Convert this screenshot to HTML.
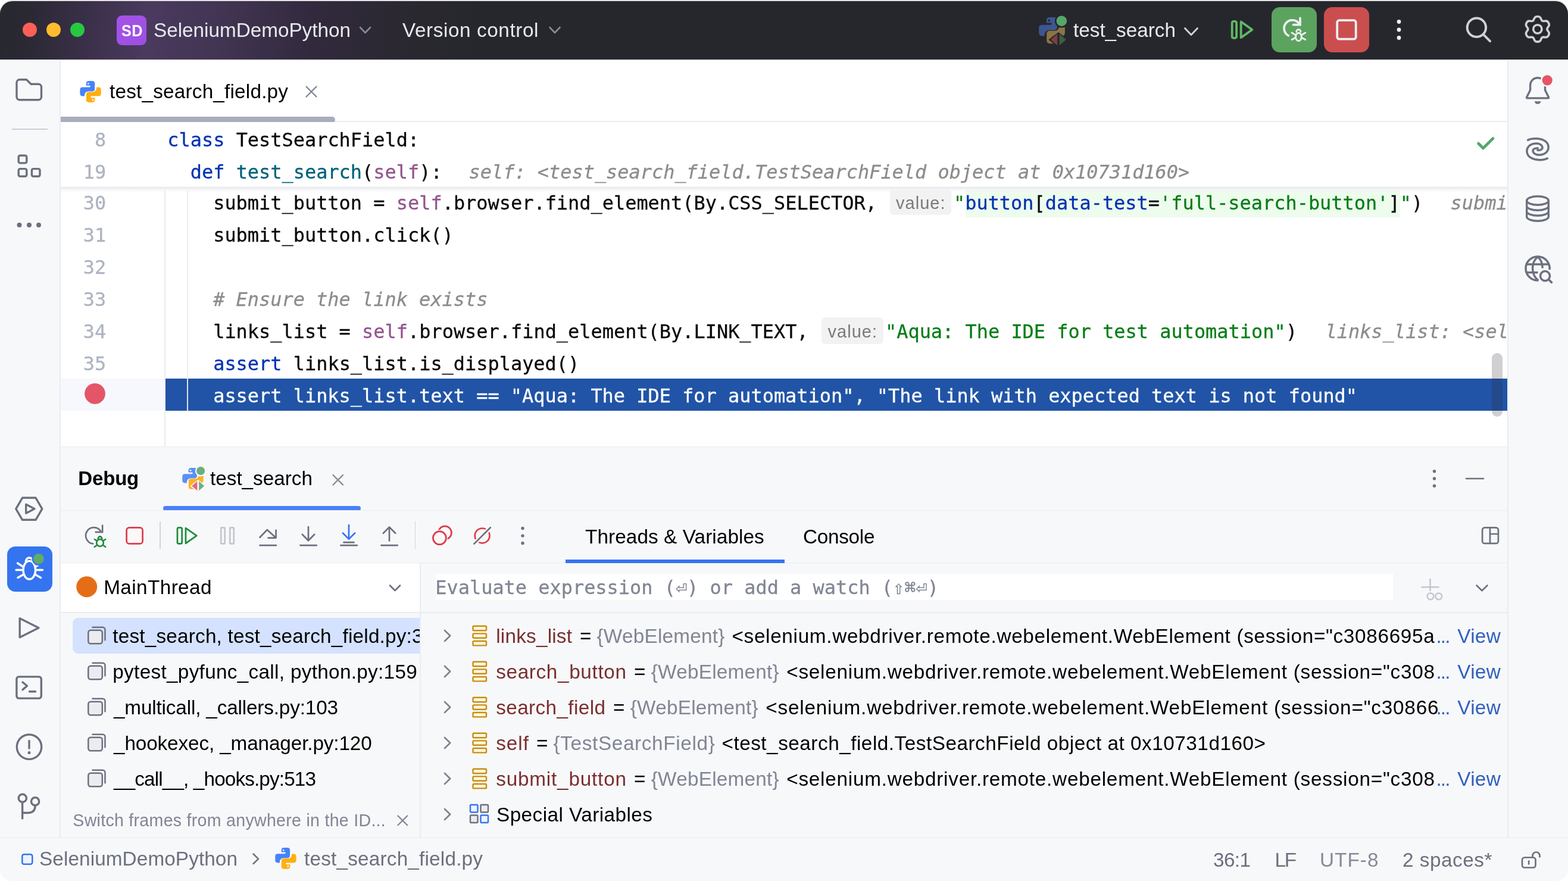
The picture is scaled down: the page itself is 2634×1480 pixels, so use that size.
<!DOCTYPE html>
<html lang="en"><head><meta charset="utf-8"><title>SeleniumDemoPython – test_search_field.py</title>
<style>
html,body{margin:0;padding:0;background:#fff;}
body{width:2634px;height:1480px;overflow:hidden;position:relative;font-family:"Liberation Sans", sans-serif;}
#win{position:absolute;left:0;top:2px;width:2634px;height:1478px;border-radius:21px;overflow:hidden;background:#F7F8FA;box-shadow:0 -1px 1px 0 rgba(120,120,130,.5);}
#page{position:absolute;left:0;top:-2px;width:2634px;height:1480px;will-change:transform;}
#page>div{position:absolute;}
.t{position:absolute;white-space:pre;}
.m{font-family:"DejaVu Sans Mono", "Liberation Mono", monospace;-webkit-text-stroke:.3px;}
#page>div.clip{overflow:hidden;}
.sd{transform:scaleX(.9);transform-origin:0 50%;letter-spacing:.5px;}
svg#ico{position:absolute;left:0;top:0;}
</style></head>
<body>
<div id="win"><div id="page">
<div style="left:0px;top:0px;width:2634px;height:100px;background:linear-gradient(96deg,#27282E 0px,#2B2934 55px,#3A2F48 145px,#4A3A5F 250px,#423553 370px,#32293D 530px,#29282F 700px,#26272D 800px,#26272D 100%);"></div>
<div style="left:196px;top:26px;width:50px;height:50px;background:linear-gradient(135deg,#A653E8,#9B4FE0);border-radius:9px;"></div>
<div style="left:0px;top:100px;width:102px;height:1307px;background:#F7F8FA;"></div>
<div style="left:100.2px;top:100px;width:1.8px;height:1307px;background:#EBECF0;"></div>
<div style="left:2534px;top:100px;width:100px;height:1307px;background:#F7F8FA;"></div>
<div style="left:2532px;top:100px;width:2px;height:1307px;background:#EBECF0;"></div>
<div style="left:102px;top:100px;width:2430px;height:650px;background:#fff;"></div>
<div style="left:102px;top:203.3px;width:2430px;height:2px;background:#EBECF0;"></div>
<div style="left:0px;top:100px;width:2634px;height:1.3px;background:#E9EAEE;"></div>
<div style="left:102px;top:196px;width:461px;height:9.5px;background:#A8ADBD;border-radius:0 5px 5px 0;"></div>
<div style="left:102px;top:636px;width:175px;height:54px;background:#F6F8FD;"></div>
<div style="left:277.5px;top:636px;width:2254.5px;height:54px;background:#2154A6;"></div>
<div style="left:1622px;top:315px;width:730px;height:50px;background:#EDFCED;"></div>
<div style="left:276px;top:314px;width:1.5px;height:436px;background:#EBECF0;"></div>
<div style="left:314px;top:314px;width:1.5px;height:322px;background:#EBECF0;"></div>
<div style="left:314px;top:636px;width:1.5px;height:54px;background:#DCE4F5;"></div>
<div style="left:1494.5px;top:316px;width:103px;height:45px;background:#F2F2F3;border-radius:7px;"></div>
<div style="left:1380px;top:532.5px;width:103.5px;height:45px;background:#F2F2F3;border-radius:7px;"></div>
<div style="left:102px;top:205px;width:2430px;height:109px;background:#fff;"></div>
<div style="left:102px;top:314px;width:2430px;height:9px;background:linear-gradient(to bottom,#E0E1E7 0,#ECEDF1 1.5px,#F4F4F7 4px,rgba(255,255,255,0) 9px);"></div>
<div style="left:2532px;top:205px;width:2px;height:545px;background:#EBECF0;"></div>
<div style="left:2534px;top:205px;width:100px;height:545px;background:#F7F8FA;"></div>
<div style="left:2506px;top:592.5px;width:17.5px;height:107.5px;background:rgba(40,40,50,.22);border-radius:9px;"></div>
<div style="left:102px;top:749.5px;width:2430px;height:1.5px;background:#EBECF0;"></div>
<div style="left:274px;top:850px;width:331.5px;height:7.5px;background:#4A82F7;border-radius:4px;"></div>
<div style="left:102px;top:856.5px;width:2430px;height:1.5px;background:#EBECF0;"></div>
<div style="left:102px;top:944.5px;width:2430px;height:1.5px;background:#EBECF0;"></div>
<div style="left:949.75px;top:939.5px;width:368.25px;height:6px;background:#3574F0;"></div>
<div style="left:102px;top:946px;width:603.5px;height:82px;background:#fff;"></div>
<div style="left:102px;top:1028px;width:2430px;height:1.5px;background:#EBECF0;"></div>
<div style="left:705.3px;top:946px;width:2px;height:461px;background:#EBECF0;"></div>
<div style="left:122px;top:1038px;width:583px;height:59.5px;background:#D4E2FF;border-radius:9px 0 0 9px;"></div>
<div style="left:705.3px;top:1030px;width:2px;height:377px;background:#EBECF0;"></div>
<div style="left:731.75px;top:964px;width:1607.75px;height:43.5px;background:#fff;"></div>
<div style="left:0px;top:1406.5px;width:2634px;height:1.5px;background:#EBECF0;"></div>
<div style="left:0px;top:1408px;width:2634px;height:72px;background:#F7F8FA;"></div>
<div style="left:2136px;top:12px;width:76px;height:76px;background:#5CA35F;border-radius:14px;"></div>
<div style="left:2224px;top:12px;width:76px;height:76px;background:#CB4E4E;border-radius:14px;"></div>
<div style="left:20px;top:215.5px;width:60px;height:2px;background:#CDCFD8;"></div>
<div style="left:12px;top:918px;width:76px;height:76px;background:#3574F0;border-radius:14px;"></div>
<div style="left:268.2px;top:876px;width:1.5px;height:45.5px;background:#D3D5DB;"></div>
<div style="left:696.8px;top:876px;width:1.5px;height:45.5px;background:#D3D5DB;"></div>
<svg id="ico" width="2634" height="1480" viewBox="0 0 2634 1480" fill="none" stroke-linecap="round" stroke-linejoin="round">
<circle cx="50" cy="50" r="12" fill="#FF5F57"/>
<circle cx="90" cy="50" r="12" fill="#FEBC2E"/>
<circle cx="130" cy="50" r="12" fill="#28C840"/>
<path d="M605 46 L613.5 55 L622 46" stroke="#868A96" stroke-width="2.6"/>
<path d="M923.5 46 L932.0 55 L940.5 46" stroke="#868A96" stroke-width="2.6"/>
<path d="M1990.5 47.5 L2001.0 58.5 L2011.5 47.5" stroke="#CED0D6" stroke-width="3"/>
<circle cx="159.5" cy="661.3" r="17.4" fill="#E45567"/>
<path d="M2483.5 241 L2491.5 249 L2508 232.5" stroke="#55A76A" stroke-width="4.6"/>
<circle cx="145.75" cy="985.75" r="17.5" fill="#E66D17"/>
<path d="M655 983.5 L663.5 992 L672 983.5" stroke="#6C707E" stroke-width="2.6"/>
<path d="M155.5 1053.8 h17 a4 4 0 0 1 4 4 v17.5" stroke="#6C707E" stroke-width="2.5"/>
<rect x="148.3" y="1058.8" width="23.5" height="22.5" rx="4" fill="#EBECF0" stroke="#6C707E" stroke-width="2.5"/>
<path d="M155.5 1113.8 h17 a4 4 0 0 1 4 4 v17.5" stroke="#6C707E" stroke-width="2.5"/>
<rect x="148.3" y="1118.8" width="23.5" height="22.5" rx="4" fill="#EBECF0" stroke="#6C707E" stroke-width="2.5"/>
<path d="M155.5 1173.8 h17 a4 4 0 0 1 4 4 v17.5" stroke="#6C707E" stroke-width="2.5"/>
<rect x="148.3" y="1178.8" width="23.5" height="22.5" rx="4" fill="#EBECF0" stroke="#6C707E" stroke-width="2.5"/>
<path d="M155.5 1233.8 h17 a4 4 0 0 1 4 4 v17.5" stroke="#6C707E" stroke-width="2.5"/>
<rect x="148.3" y="1238.8" width="23.5" height="22.5" rx="4" fill="#EBECF0" stroke="#6C707E" stroke-width="2.5"/>
<path d="M155.5 1293.8 h17 a4 4 0 0 1 4 4 v17.5" stroke="#6C707E" stroke-width="2.5"/>
<rect x="148.3" y="1298.8" width="23.5" height="22.5" rx="4" fill="#EBECF0" stroke="#6C707E" stroke-width="2.5"/>
<path d="M668.4 1370.5 l15.8 15.8 M684.2 1370.5 l-15.8 15.8" stroke="#818594" stroke-width="2.3"/>
<path d="M747.0 1059 L756.2 1068 L747.0 1077" stroke="#7D8190" stroke-width="2.6"/>
<rect x="794.5" y="1051.8" width="22.5" height="7.4" rx="1.5" fill="#FFF6DE" stroke="#C98E10" stroke-width="2.4"/>
<rect x="794.5" y="1064.3999999999999" width="22.5" height="7.4" rx="1.5" fill="#FFF6DE" stroke="#C98E10" stroke-width="2.4"/>
<rect x="794.5" y="1077.0" width="22.5" height="7.4" rx="1.5" fill="#FFF6DE" stroke="#C98E10" stroke-width="2.4"/>
<path d="M747.0 1119 L756.2 1128 L747.0 1137" stroke="#7D8190" stroke-width="2.6"/>
<rect x="794.5" y="1111.8" width="22.5" height="7.4" rx="1.5" fill="#FFF6DE" stroke="#C98E10" stroke-width="2.4"/>
<rect x="794.5" y="1124.3999999999999" width="22.5" height="7.4" rx="1.5" fill="#FFF6DE" stroke="#C98E10" stroke-width="2.4"/>
<rect x="794.5" y="1137.0" width="22.5" height="7.4" rx="1.5" fill="#FFF6DE" stroke="#C98E10" stroke-width="2.4"/>
<path d="M747.0 1179 L756.2 1188 L747.0 1197" stroke="#7D8190" stroke-width="2.6"/>
<rect x="794.5" y="1171.8" width="22.5" height="7.4" rx="1.5" fill="#FFF6DE" stroke="#C98E10" stroke-width="2.4"/>
<rect x="794.5" y="1184.3999999999999" width="22.5" height="7.4" rx="1.5" fill="#FFF6DE" stroke="#C98E10" stroke-width="2.4"/>
<rect x="794.5" y="1197.0" width="22.5" height="7.4" rx="1.5" fill="#FFF6DE" stroke="#C98E10" stroke-width="2.4"/>
<path d="M747.0 1239 L756.2 1248 L747.0 1257" stroke="#7D8190" stroke-width="2.6"/>
<rect x="794.5" y="1231.8" width="22.5" height="7.4" rx="1.5" fill="#FFF6DE" stroke="#C98E10" stroke-width="2.4"/>
<rect x="794.5" y="1244.3999999999999" width="22.5" height="7.4" rx="1.5" fill="#FFF6DE" stroke="#C98E10" stroke-width="2.4"/>
<rect x="794.5" y="1257.0" width="22.5" height="7.4" rx="1.5" fill="#FFF6DE" stroke="#C98E10" stroke-width="2.4"/>
<path d="M747.0 1299 L756.2 1308 L747.0 1317" stroke="#7D8190" stroke-width="2.6"/>
<rect x="794.5" y="1291.8" width="22.5" height="7.4" rx="1.5" fill="#FFF6DE" stroke="#C98E10" stroke-width="2.4"/>
<rect x="794.5" y="1304.3999999999999" width="22.5" height="7.4" rx="1.5" fill="#FFF6DE" stroke="#C98E10" stroke-width="2.4"/>
<rect x="794.5" y="1317.0" width="22.5" height="7.4" rx="1.5" fill="#FFF6DE" stroke="#C98E10" stroke-width="2.4"/>
<path d="M747.0 1359 L756.2 1368 L747.0 1377" stroke="#7D8190" stroke-width="2.6"/>
<rect x="790" y="1352" width="12.5" height="12.5" rx="1.5" fill="#EDF3FF" stroke="#3574F0" stroke-width="2.4"/>
<rect x="807.5" y="1352" width="12.5" height="12.5" rx="1.5" fill="#EBECF0" stroke="#6C707E" stroke-width="2.4"/>
<rect x="790" y="1369.5" width="12.5" height="12.5" rx="1.5" fill="#EBECF0" stroke="#6C707E" stroke-width="2.4"/>
<rect x="807.5" y="1369.5" width="12.5" height="12.5" rx="1.5" fill="#EDF3FF" stroke="#3574F0" stroke-width="2.4"/>
<rect x="37.3" y="1435.3" width="17" height="16.5" rx="3" fill="#EDF3FF" stroke="#3574F0" stroke-width="2.5"/>
<path d="M425.5 1434.5 L434 1442.8 L425.5 1451" stroke="#6C707E" stroke-width="2.5"/>
<g transform="translate(134.4 136.1) scale(1.0000)" stroke="none" fill-rule="evenodd"><path d="M15 0H20.4Q24.8 0 24.8 4.4V13.1Q24.8 17.5 20.4 17.5H14.2Q7.6 17.5 7.4 25.4H4.4Q0 25.4 0 21V14.7Q0 10.3 4.4 10.3H16.1A1.35 1.35 0 0 0 16.1 7.6H10.3V4.4Q10.3 0 15 0ZM13.8 2.9a1.4 1.4 0 1 0 .01 0Z" fill="#4682FA"/><path d="M15 0H20.4Q24.8 0 24.8 4.4V13.1Q24.8 17.5 20.4 17.5H14.2Q7.6 17.5 7.4 25.4H4.4Q0 25.4 0 21V14.7Q0 10.3 4.4 10.3H16.1A1.35 1.35 0 0 0 16.1 7.6H10.3V4.4Q10.3 0 15 0ZM13.8 2.9a1.4 1.4 0 1 0 .01 0Z" fill="#FFAF0F" transform="rotate(180 17.65 17.9)"/></g>
<g transform="translate(462.3 1424) scale(1.0000)" stroke="none" fill-rule="evenodd"><path d="M15 0H20.4Q24.8 0 24.8 4.4V13.1Q24.8 17.5 20.4 17.5H14.2Q7.6 17.5 7.4 25.4H4.4Q0 25.4 0 21V14.7Q0 10.3 4.4 10.3H16.1A1.35 1.35 0 0 0 16.1 7.6H10.3V4.4Q10.3 0 15 0ZM13.8 2.9a1.4 1.4 0 1 0 .01 0Z" fill="#4682FA"/><path d="M15 0H20.4Q24.8 0 24.8 4.4V13.1Q24.8 17.5 20.4 17.5H14.2Q7.6 17.5 7.4 25.4H4.4Q0 25.4 0 21V14.7Q0 10.3 4.4 10.3H16.1A1.35 1.35 0 0 0 16.1 7.6H10.3V4.4Q10.3 0 15 0ZM13.8 2.9a1.4 1.4 0 1 0 .01 0Z" fill="#FFAF0F" transform="rotate(180 17.65 17.9)"/></g>
<path d="M514.5 145.5 l17 17 M531.5 145.5 l-17 17" stroke="#818594" stroke-width="2.3"/>
<path d="M559.5 798 l16.5 16.5 M576.0 798 l-16.5 16.5" stroke="#818594" stroke-width="2.3"/>
<g stroke="none"><g transform="translate(1745.2 29) scale(1.2380)" stroke="none" fill-rule="evenodd"><path d="M15 0H20.4Q24.8 0 24.8 4.4V13.1Q24.8 17.5 20.4 17.5H14.2Q7.6 17.5 7.4 25.4H4.4Q0 25.4 0 21V14.7Q0 10.3 4.4 10.3H16.1A1.35 1.35 0 0 0 16.1 7.6H10.3V4.4Q10.3 0 15 0ZM13.8 2.9a1.4 1.4 0 1 0 .01 0Z" fill="#3C5690"/><path d="M15 0H20.4Q24.8 0 24.8 4.4V13.1Q24.8 17.5 20.4 17.5H14.2Q7.6 17.5 7.4 25.4H4.4Q0 25.4 0 21V14.7Q0 10.3 4.4 10.3H16.1A1.35 1.35 0 0 0 16.1 7.6H10.3V4.4Q10.3 0 15 0ZM13.8 2.9a1.4 1.4 0 1 0 .01 0Z" fill="#8B7542" transform="rotate(180 17.65 17.9)"/></g><circle cx="1783.33" cy="35.19" r="11.39" fill="#26272D"/><circle cx="1783.33" cy="35.19" r="8.73" fill="#55A76A"/><path d="M1777.94 53.88 L1794.53 66.76 L1777.94 79.63 L1761.36 66.76 Z" fill="#26272D"/><path d="M1775.84 57.84 V75.67 L1765.56 66.76 Z" fill="#7C3F46" stroke="#7C3F46" stroke-width="0.74"/><path d="M1780.05 57.84 V75.67 L1790.32 66.76 Z" fill="#3D5E43" stroke="#3D5E43" stroke-width="0.74"/></g>
<g stroke="none"><g transform="translate(306.3 786) scale(1.0000)" stroke="none" fill-rule="evenodd"><path d="M15 0H20.4Q24.8 0 24.8 4.4V13.1Q24.8 17.5 20.4 17.5H14.2Q7.6 17.5 7.4 25.4H4.4Q0 25.4 0 21V14.7Q0 10.3 4.4 10.3H16.1A1.35 1.35 0 0 0 16.1 7.6H10.3V4.4Q10.3 0 15 0ZM13.8 2.9a1.4 1.4 0 1 0 .01 0Z" fill="#5B8FF9"/><path d="M15 0H20.4Q24.8 0 24.8 4.4V13.1Q24.8 17.5 20.4 17.5H14.2Q7.6 17.5 7.4 25.4H4.4Q0 25.4 0 21V14.7Q0 10.3 4.4 10.3H16.1A1.35 1.35 0 0 0 16.1 7.6H10.3V4.4Q10.3 0 15 0ZM13.8 2.9a1.4 1.4 0 1 0 .01 0Z" fill="#FDB226" transform="rotate(180 17.65 17.9)"/></g><circle cx="337.10" cy="791.00" r="9.20" fill="#F7F8FA"/><circle cx="337.10" cy="791.00" r="7.05" fill="#69B07E"/><path d="M332.75 806.10 L346.15 816.50 L332.75 826.90 L319.35 816.50 Z" fill="#F7F8FA"/><path d="M331.05 809.30 V823.70 L322.75 816.50 Z" fill="#E56578" stroke="#E56578" stroke-width="0.60"/><path d="M334.45 809.30 V823.70 L342.75 816.50 Z" fill="#69B07E" stroke="#69B07E" stroke-width="0.60"/></g>
<rect x="2069.7000000000003" y="35.9" width="7.3999999999999995" height="28.0" rx="2.5" fill="none" stroke="#5FB865" stroke-width="3.8"/>
<path d="M2084.70 36.50 V63.30 L2103.40 49.90 Z" fill="none" stroke="#5FB865" stroke-width="3.8"/>
<rect x="2246.2" y="34.2" width="31.5" height="31.5" rx="3.5" stroke="#EDEEF2" stroke-width="3.8"/>
<path d="M2182.85 40.70 A13.8 13.8 0 1 0 2165.73 60.40" stroke="#EDEEF2" stroke-width="3.8" stroke-linecap="butt"/>
<path d="M2184.0 30.400000000000002 V41.6 H2172.5" stroke="#EDEEF2" stroke-width="3.8" stroke-linejoin="miter"/>
<g stroke="#EDEEF2" stroke-width="2.9"><path d="M2170.00 55.00 L2176.00 58.60 M2192.80 55.00 L2186.80 58.60 M2170.00 66.60 L2176.00 63.40 M2192.80 66.60 L2186.80 63.40"/><path d="M2177.80 53.40 a3.60 3.90 0 0 1 7.20 0" fill="#5CA35F"/><ellipse cx="2181.4" cy="62.0" rx="4.9" ry="6.7" fill="#5CA35F"/></g>
<path d="M169.48 893.00 A13.6 13.6 0 1 0 157.23 913.39" stroke="#6C707E" stroke-width="2.7" stroke-linecap="butt"/>
<path d="M172.1 882.5999999999999 V893.8 H160.6" stroke="#6C707E" stroke-width="2.7" stroke-linejoin="miter"/>
<g stroke="#208A3C" stroke-width="2.6"><path d="M158.80 906.00 L162.60 908.40 M177.20 906.00 L173.40 908.40 M158.80 918.70 L162.60 916.00 M177.20 918.70 L173.40 916.00"/><path d="M164.80 904.90 a3.20 3.50 0 0 1 6.40 0" fill="#F2FCF3"/><ellipse cx="168.0" cy="911.9" rx="5.75" ry="6.0" fill="#F2FCF3"/></g>
<circle cx="2350" cy="36.5" r="3.4" fill="#EDEEF2"/>
<circle cx="2350" cy="50" r="3.4" fill="#EDEEF2"/>
<circle cx="2350" cy="63.5" r="3.4" fill="#EDEEF2"/>
<circle cx="2480.4" cy="46.3" r="15.7" stroke="#CED0D6" stroke-width="4"/><path d="M2491.8 57.8 L2503 69.2" stroke="#CED0D6" stroke-width="4"/>
<path d="M2577.56 30.60 Q2578.92 27.70 2582.12 27.70 L2583.58 27.70 Q2586.78 27.70 2588.14 30.60 L2589.48 33.48 Q2590.50 35.65 2592.89 35.44 L2596.06 35.17 Q2599.25 34.90 2600.85 37.67 L2601.57 38.93 Q2603.17 41.70 2601.34 44.33 L2599.52 46.93 Q2598.15 48.90 2599.52 50.87 L2601.34 53.47 Q2603.17 56.10 2601.57 58.87 L2600.85 60.13 Q2599.25 62.90 2596.06 62.63 L2592.89 62.36 Q2590.50 62.15 2589.48 64.32 L2588.14 67.20 Q2586.78 70.10 2583.58 70.10 L2582.12 70.10 Q2578.92 70.10 2577.56 67.20 L2576.22 64.32 Q2575.20 62.15 2572.81 62.36 L2569.64 62.63 Q2566.45 62.90 2564.85 60.13 L2564.13 58.87 Q2562.53 56.10 2564.36 53.47 L2566.18 50.87 Q2567.55 48.90 2566.18 46.93 L2564.36 44.33 Q2562.53 41.70 2564.13 38.93 L2564.85 37.67 Q2566.45 34.90 2569.64 35.17 L2572.81 35.44 Q2575.20 35.65 2576.22 33.48 Z" stroke="#CED0D6" stroke-width="3.6"/>
<circle cx="2582.85" cy="48.9" r="7.15" stroke="#CED0D6" stroke-width="3.6"/>
<path d="M28 138.7a5 5 0 0 1 5-5h11.5l7.5 7.5h12.5a5 5 0 0 1 5 5v16.6a5 5 0 0 1-5 5h-31.5a5 5 0 0 1-5-5z" stroke="#6C707E" stroke-width="3.4"/>
<rect x="31.2" y="261.2" width="13.6" height="12.7" rx="2.5" stroke="#6C707E" stroke-width="3.4"/>
<rect x="31.2" y="283.6" width="13.6" height="12.7" rx="2.5" stroke="#6C707E" stroke-width="3.4"/>
<rect x="53.4" y="283.6" width="13.6" height="12.7" rx="2.5" stroke="#6C707E" stroke-width="3.4"/>
<circle cx="32.5" cy="378" r="4" fill="#6C707E"/>
<circle cx="49" cy="378" r="4" fill="#6C707E"/>
<circle cx="65" cy="378" r="4" fill="#6C707E"/>
<path d="M26.8 854.8 L37.6 836.3 H60 L70.8 854.8 L60 873.3 H37.6 Z" stroke="#6C707E" stroke-width="3.4"/>
<path d="M43.7 847.2 V862.3 L58 854.8 Z" stroke="#6C707E" stroke-width="3.4"/>
<g stroke="#fff" stroke-width="3.4"><path d="M43.3 943.5 a6 6.5 0 0 1 12 0"/><ellipse cx="49.3" cy="957.7" rx="10.3" ry="15.3"/><path d="M29.5 946 L38.5 952 M27 957.5 H38.5 M30 970.5 L39.5 965 M69 946 L60 952 M71.5 957.5 H60 M68.5 970.5 L59 965"/></g>
<circle cx="65" cy="938.8" r="11.4" fill="#3574F0"/><circle cx="65" cy="938.8" r="8.8" fill="#5FAD65"/>
<path d="M33.2 1038.8 V1070.7 L65 1054.75 Z" stroke="#6C707E" stroke-width="3.4"/>
<rect x="27.9" y="1136.9" width="41.4" height="36.2" rx="4" stroke="#6C707E" stroke-width="3.4"/><path d="M38 1146 L45.5 1152.3 L38 1158.6 M49.5 1161.8 H59.5" stroke="#6C707E" stroke-width="3.4"/>
<circle cx="49" cy="1254.7" r="20.7" stroke="#6C707E" stroke-width="3.4"/><path d="M49 1244.5 V1257" stroke="#6C707E" stroke-width="3.4"/><circle cx="49" cy="1264.5" r="2.5" fill="#6C707E"/>
<circle cx="37.8" cy="1340.9" r="6.6" stroke="#6C707E" stroke-width="3.4"/><circle cx="59.1" cy="1346.4" r="6.6" stroke="#6C707E" stroke-width="3.4"/><path d="M37.6 1348 V1375 M59.1 1353.5 Q59.1 1365.5 47 1365.5 H37.6" stroke="#6C707E" stroke-width="3.4"/>
<path d="M2570.6 151.2 V143.2 A12.45 12.45 0 0 1 2595.5 143.2 V151.2 L2601.5 163.4 Q2602.2 164.9 2600.4 164.9 H2565.7 Q2563.9 164.9 2564.6 163.4 Z" stroke="#6C707E" stroke-width="3.4"/>
<path d="M2577.9 170.2 h10.4 a5.2 4.7 0 0 1 -10.4 0z" fill="#6C707E"/>
<circle cx="2599.2" cy="134.8" r="11.2" fill="#F7F8FA"/><circle cx="2599.2" cy="134.8" r="8.6" fill="#E55567"/>
<path d="M2566.68 235.34 C2572.90 232.02 2586.17 231.19 2594.87 236.58 C2602.75 241.56 2603.17 251.51 2596.53 256.90 C2590.31 261.46 2579.95 261.46 2576.22 256.48 C2573.32 252.34 2576.22 248.19 2583.27 249.02" stroke="#6C707E" stroke-width="3.5"/>
<path d="M2599.43 266.02 C2593.22 269.34 2579.95 270.17 2571.24 264.78 C2563.36 259.80 2562.95 249.85 2569.58 244.46 C2575.80 239.90 2586.17 239.90 2589.90 244.88 C2592.80 249.02 2589.90 253.17 2582.85 252.34" stroke="#6C707E" stroke-width="3.5"/>
<ellipse cx="2583" cy="337" rx="18.3" ry="7.3" stroke="#6C707E" stroke-width="3.4"/><path d="M2564.7 337 V364 a18.3 7.3 0 0 0 36.6 0 V337 M2564.7 346 a18.3 7.3 0 0 0 36.6 0 M2564.7 355 a18.3 7.3 0 0 0 36.6 0" stroke="#6C707E" stroke-width="3.4"/>
<g stroke="#6C707E" stroke-width="3.5" stroke-linecap="butt"><path d="M2603.09 453.10 A20.1 20.1 0 1 0 2584.50 471.05"/><path d="M2565 444.1 H2601.2 M2565 457.8 H2583.5"/><path d="M2583.1 431.5 C2571.5 441 2571.5 461 2584 471.2"/><path d="M2583.1 431.5 C2588.5 436 2591.3 442.5 2591.2 450.5"/></g><circle cx="2595.5" cy="463.6" r="8.05" stroke="#6C707E" stroke-width="3.5"/><path d="M2601.6 469.8 L2606.4 474.4" stroke="#6C707E" stroke-width="3.6"/>
<rect x="212.6" y="886.4" width="27" height="27" rx="4.5" fill="#FFF7F7" stroke="#DB3B4B" stroke-width="2.7"/>
<rect x="297.95000000000005" y="886.45" width="7.760377358490564" height="27.0" rx="2.5" fill="#F2FCF3" stroke="#208A3C" stroke-width="2.7"/>
<path d="M311.96 887.05 V912.85 L330.30 899.95 Z" fill="#F2FCF3" stroke="#208A3C" stroke-width="2.7"/>
<rect x="371.2" y="886.4" width="6.5" height="27" rx="1.5" stroke="#C4C6CE" stroke-width="2.7"/>
<rect x="386.3" y="886.4" width="6.5" height="27" rx="1.5" stroke="#C4C6CE" stroke-width="2.7"/>
<path d="M436.5 902.7 L448.8 890 L463.3 903.3 M463.6 890.6 V903.6 H450.5 M436.5 916.1 H464" stroke="#6C707E" stroke-width="2.7"/>
<path d="M518 885 V908 M507.8 897.8 L518 908.2 L528.2 897.8 M504.4 916.1 H531.8" stroke="#6C707E" stroke-width="2.7"/>
<path d="M586 882.2 V905.3 M575.9 895.5 L586 905.6 L596.1 895.5" stroke="#3574F0" stroke-width="2.7"/><path d="M577.5 911.2 H594.5 M572.4 916.1 H599.8" stroke="#6C707E" stroke-width="2.7"/>
<path d="M654 886 V908.5 M643.8 895.8 L654 885.4 L664.2 895.8 M640.4 916.1 H667.8" stroke="#6C707E" stroke-width="2.7"/>
<circle cx="747.4" cy="894.9" r="11" fill="#FFF7F7" stroke="#DB3B4B" stroke-width="2.7"/><circle cx="738.4" cy="903.7" r="13.6" fill="#F7F8FA"/><circle cx="738.4" cy="903.7" r="11" fill="#FFF7F7" stroke="#DB3B4B" stroke-width="2.7"/>
<circle cx="810.1" cy="899.9" r="12.4" fill="#FFF7F7" stroke="#DB3B4B" stroke-width="2.7"/><path d="M796.4 913.6 L823.8 886.3" stroke="#F7F8FA" stroke-width="7.5" stroke-linecap="butt"/><path d="M796.4 913.6 L823.8 886.3" stroke="#6C707E" stroke-width="2.7"/>
<circle cx="878" cy="887.5" r="2.7" fill="#6C707E"/>
<circle cx="878" cy="900.1" r="2.7" fill="#6C707E"/>
<circle cx="878" cy="912.5" r="2.7" fill="#6C707E"/>
<circle cx="2409.5" cy="791.8" r="2.7" fill="#6C707E"/>
<circle cx="2409.5" cy="804" r="2.7" fill="#6C707E"/>
<circle cx="2409.5" cy="816.2" r="2.7" fill="#6C707E"/>
<path d="M2463 804 H2492" stroke="#6C707E" stroke-width="2.7"/>
<rect x="2490.1" y="886.4" width="26.8" height="26.5" rx="4" stroke="#6C707E" stroke-width="2.7"/><path d="M2503 886.4 V912.9 M2503 897 H2516.9" stroke="#6C707E" stroke-width="2.7"/>
<path d="M2402.5 972 V993 M2387.5 986.2 H2417.5" stroke="#C4C6CE" stroke-width="2.5" stroke-linecap="butt"/><circle cx="2403" cy="1001.8" r="5.4" stroke="#C4C6CE" stroke-width="2.5" fill="#F7F8FA"/><circle cx="2416.8" cy="1001.8" r="5.4" stroke="#C4C6CE" stroke-width="2.5" fill="#F7F8FA"/>
<path d="M2480.5 983.5 L2489.5 992.3 L2498.5 983.5" stroke="#6C707E" stroke-width="2.6"/>
<rect x="2557" y="1440.5" width="22.5" height="17" rx="4" stroke="#6C707E" stroke-width="2.7"/><path d="M2568.2 1446.5 V1451.5" stroke="#6C707E" stroke-width="2.7"/><path d="M2574.5 1440 V1437.5 a6 6 0 0 1 12 0 V1439.5" stroke="#6C707E" stroke-width="2.7"/>
</svg>
<span class="t sd" style="left:203.80px;top:34.00px;font-size:28px;line-height:35px;color:#fff;font-weight:bold">SD</span>
<span class="t" style="left:258.00px;top:29.50px;font-size:33.3px;line-height:42px;color:#E8E9EE;letter-spacing:-0.017px">SeleniumDemoPython</span>
<span class="t" style="left:676.00px;top:29.50px;font-size:33.3px;line-height:42px;color:#E8E9EE;letter-spacing:0.588px">Version control</span>
<span class="t" style="left:1803.00px;top:29.50px;font-size:33.3px;line-height:42px;color:#E8E9EE;letter-spacing:-0.014px">test_search</span>
<span class="t" style="left:184.00px;top:132.50px;font-size:33.3px;line-height:42px;color:#000;letter-spacing:0.202px">test_search_field.py</span>
<span class="t m" style="left:358.20px;top:321.00px;font-size:31.935px;line-height:40px;color:#080808">submit_button = </span>
<span class="t m" style="left:665.80px;top:321.00px;font-size:31.935px;line-height:40px;color:#94558D">self</span>
<span class="t m" style="left:742.70px;top:321.00px;font-size:31.935px;line-height:40px;color:#080808">.browser.find_element(By.CSS_SELECTOR,</span>
<span class="t m" style="left:1602.00px;top:321.00px;font-size:31.935px;line-height:40px;color:#067D17">"</span>
<span class="t m" style="left:1621.22px;top:321.00px;font-size:31.935px;line-height:40px;color:#0033B3">button</span>
<span class="t m" style="left:1736.57px;top:321.00px;font-size:31.935px;line-height:40px;color:#080808">[</span>
<span class="t m" style="left:1755.80px;top:321.00px;font-size:31.935px;line-height:40px;color:#0033B3">data-test</span>
<span class="t m" style="left:1928.82px;top:321.00px;font-size:31.935px;line-height:40px;color:#080808">=</span>
<span class="t m" style="left:1948.05px;top:321.00px;font-size:31.935px;line-height:40px;color:#067D17">'full-search-button'</span>
<span class="t m" style="left:2332.55px;top:321.00px;font-size:31.935px;line-height:40px;color:#080808">]</span>
<span class="t m" style="left:2351.77px;top:321.00px;font-size:31.935px;line-height:40px;color:#067D17">"</span>
<span class="t m" style="left:2371.00px;top:321.00px;font-size:31.935px;line-height:40px;color:#080808">)</span>
<span class="t m" style="left:2436.50px;top:321.00px;font-size:31.935px;line-height:40px;color:#8C8C8C;font-style:italic">submi</span>
<span class="t" style="left:1505.00px;top:322.50px;font-size:29px;line-height:36px;color:#7A7A7A;letter-spacing:1.022px">value:</span>
<span class="t m" style="left:358.20px;top:375.00px;font-size:31.935px;line-height:40px;color:#080808">submit_button.click()</span>
<span class="t m" style="left:358.20px;top:483.00px;font-size:31.935px;line-height:40px;color:#8C8C8C;font-style:italic"># Ensure the link exists</span>
<span class="t m" style="left:358.20px;top:537.00px;font-size:31.935px;line-height:40px;color:#080808">links_list = </span>
<span class="t m" style="left:608.12px;top:537.00px;font-size:31.935px;line-height:40px;color:#94558D">self</span>
<span class="t m" style="left:685.03px;top:537.00px;font-size:31.935px;line-height:40px;color:#080808">.browser.find_element(By.LINK_TEXT,</span>
<span class="t m" style="left:1487.00px;top:537.00px;font-size:31.935px;line-height:40px;color:#067D17">"Aqua: The IDE for test automation"</span>
<span class="t m" style="left:2159.88px;top:537.00px;font-size:31.935px;line-height:40px;color:#080808">)</span>
<span class="t m" style="left:2226.50px;top:537.00px;font-size:31.935px;line-height:40px;color:#8C8C8C;font-style:italic">links_list: &lt;sel</span>
<span class="t" style="left:1390.50px;top:538.50px;font-size:29px;line-height:36px;color:#7A7A7A;letter-spacing:1.022px">value:</span>
<span class="t m" style="left:358.20px;top:591.00px;font-size:31.935px;line-height:40px;color:#0033B3">assert</span>
<span class="t m" style="left:473.55px;top:591.00px;font-size:31.935px;line-height:40px;color:#080808"> links_list.is_displayed()</span>
<span class="t m" style="left:358.20px;top:645.00px;font-size:31.935px;line-height:40px;color:#fff">assert links_list.text == "Aqua: The IDE for automation", "The link with expected text is not found"</span>
<span class="t m" style="left:139.85px;top:321.00px;font-size:31.935px;line-height:40px;color:#AEB3C2">30</span>
<span class="t m" style="left:139.85px;top:375.00px;font-size:31.935px;line-height:40px;color:#AEB3C2">31</span>
<span class="t m" style="left:139.85px;top:429.00px;font-size:31.935px;line-height:40px;color:#AEB3C2">32</span>
<span class="t m" style="left:139.85px;top:483.00px;font-size:31.935px;line-height:40px;color:#AEB3C2">33</span>
<span class="t m" style="left:139.85px;top:537.00px;font-size:31.935px;line-height:40px;color:#AEB3C2">34</span>
<span class="t m" style="left:139.85px;top:591.00px;font-size:31.935px;line-height:40px;color:#AEB3C2">35</span>
<span class="t m" style="left:159.08px;top:215.00px;font-size:31.935px;line-height:40px;color:#AEB3C2">8</span>
<span class="t m" style="left:139.85px;top:269.00px;font-size:31.935px;line-height:40px;color:#AEB3C2">19</span>
<span class="t m" style="left:281.30px;top:215.00px;font-size:31.935px;line-height:40px;color:#0033B3">class</span>
<span class="t m" style="left:377.43px;top:215.00px;font-size:31.935px;line-height:40px;color:#080808"> TestSearchField:</span>
<span class="t m" style="left:319.75px;top:269.00px;font-size:31.935px;line-height:40px;color:#0033B3">def</span>
<span class="t m" style="left:377.43px;top:269.00px;font-size:31.935px;line-height:40px;color:#080808"> </span>
<span class="t m" style="left:396.65px;top:269.00px;font-size:31.935px;line-height:40px;color:#00627A">test_search</span>
<span class="t m" style="left:608.12px;top:269.00px;font-size:31.935px;line-height:40px;color:#080808">(</span>
<span class="t m" style="left:627.35px;top:269.00px;font-size:31.935px;line-height:40px;color:#94558D">self</span>
<span class="t m" style="left:704.25px;top:269.00px;font-size:31.935px;line-height:40px;color:#080808">):</span>
<span class="t m" style="left:787.50px;top:269.00px;font-size:31.935px;line-height:40px;color:#8C8C8C;font-style:italic">self: &lt;test_search_field.TestSearchField object at 0x10731d160&gt;</span>
<span class="t" style="left:131.30px;top:783.00px;font-size:33px;line-height:41px;color:#000;font-weight:bold;letter-spacing:-0.168px">Debug</span>
<span class="t" style="left:353.00px;top:782.50px;font-size:33.3px;line-height:42px;color:#000;letter-spacing:-0.014px">test_search</span>
<span class="t" style="left:983.00px;top:881.25px;font-size:33.3px;line-height:42px;color:#000;letter-spacing:0.086px">Threads &amp; Variables</span>
<span class="t" style="left:1349.00px;top:881.25px;font-size:33.3px;line-height:42px;color:#000;letter-spacing:-0.279px">Console</span>
<span class="t" style="left:174.20px;top:965.50px;font-size:33.3px;line-height:42px;color:#000;letter-spacing:0.403px">MainThread</span>
<div class="clip" style="left:189.30px;top:1047.50px;width:516.0px;height:42px"><span class="t" style="left:0;top:0;font-size:33.3px;line-height:42px;color:#000;letter-spacing:0.198px">test_search, test_search_field.py:36</span></div>
<span class="t" style="left:189.30px;top:1107.50px;font-size:33.3px;line-height:42px;color:#000;letter-spacing:0.308px">pytest_pyfunc_call, python.py:159</span>
<span class="t" style="left:191.00px;top:1167.50px;font-size:33.3px;line-height:42px;color:#000;letter-spacing:-0.163px">_multicall, _callers.py:103</span>
<span class="t" style="left:191.00px;top:1227.50px;font-size:33.3px;line-height:42px;color:#000;letter-spacing:-0.126px">_hookexec, _manager.py:120</span>
<span class="t" style="left:191.00px;top:1287.50px;font-size:33.3px;line-height:42px;color:#000;letter-spacing:-0.870px">__call__, _hooks.py:513</span>
<span class="t" style="left:122.30px;top:1360.00px;font-size:28.6px;line-height:36px;color:#818594;letter-spacing:0.272px">Switch frames from anywhere in the ID...</span>
<span class="t m" style="left:731.30px;top:967.00px;font-size:31.935px;line-height:40px;color:#818594">Evaluate expression (⏎) or add a watch (⇧⌘⏎)</span>
<span class="t" style="left:833.20px;top:1047.50px;font-size:33.3px;line-height:42px;color:#7A2F2F;letter-spacing:0.219px">links_list</span>
<span class="t" style="left:974.00px;top:1047.50px;font-size:33.3px;line-height:42px;color:#000">=</span>
<span class="t" style="left:1002.50px;top:1047.50px;font-size:33.3px;line-height:42px;color:#818594;letter-spacing:0.249px">{WebElement}</span>
<span class="t" style="left:1229.45px;top:1047.50px;font-size:33.3px;line-height:42px;color:#000;letter-spacing:0.681px">&lt;selenium.webdriver.remote.webelement.WebElement (session="c3086695a</span>
<span class="t" style="left:2412.50px;top:1047.50px;font-size:33.3px;line-height:42px;color:#315FBD;letter-spacing:-1.883px">...</span>
<span class="t" style="left:2448.25px;top:1047.50px;font-size:33.3px;line-height:42px;color:#315FBD;letter-spacing:0.307px">View</span>
<span class="t" style="left:833.20px;top:1107.50px;font-size:33.3px;line-height:42px;color:#7A2F2F;letter-spacing:0.646px">search_button</span>
<span class="t" style="left:1065.00px;top:1107.50px;font-size:33.3px;line-height:42px;color:#000">=</span>
<span class="t" style="left:1093.75px;top:1107.50px;font-size:33.3px;line-height:42px;color:#818594;letter-spacing:0.249px">{WebElement}</span>
<span class="t" style="left:1321.20px;top:1107.50px;font-size:33.3px;line-height:42px;color:#000;letter-spacing:0.753px">&lt;selenium.webdriver.remote.webelement.WebElement (session="c308</span>
<span class="t" style="left:2412.50px;top:1107.50px;font-size:33.3px;line-height:42px;color:#315FBD;letter-spacing:-1.883px">...</span>
<span class="t" style="left:2448.25px;top:1107.50px;font-size:33.3px;line-height:42px;color:#315FBD;letter-spacing:0.307px">View</span>
<span class="t" style="left:833.20px;top:1167.50px;font-size:33.3px;line-height:42px;color:#7A2F2F;letter-spacing:0.387px">search_field</span>
<span class="t" style="left:1030.00px;top:1167.50px;font-size:33.3px;line-height:42px;color:#000">=</span>
<span class="t" style="left:1058.75px;top:1167.50px;font-size:33.3px;line-height:42px;color:#818594;letter-spacing:0.249px">{WebElement}</span>
<span class="t" style="left:1286.20px;top:1167.50px;font-size:33.3px;line-height:42px;color:#000;letter-spacing:0.800px">&lt;selenium.webdriver.remote.webelement.WebElement (session="c30866</span>
<span class="t" style="left:2412.50px;top:1167.50px;font-size:33.3px;line-height:42px;color:#315FBD;letter-spacing:-1.883px">...</span>
<span class="t" style="left:2448.25px;top:1167.50px;font-size:33.3px;line-height:42px;color:#315FBD;letter-spacing:0.307px">View</span>
<span class="t" style="left:833.20px;top:1227.50px;font-size:33.3px;line-height:42px;color:#7A2F2F;letter-spacing:0.991px">self</span>
<span class="t" style="left:901.00px;top:1227.50px;font-size:33.3px;line-height:42px;color:#000">=</span>
<span class="t" style="left:929.50px;top:1227.50px;font-size:33.3px;line-height:42px;color:#818594;letter-spacing:0.642px">{TestSearchField}</span>
<span class="t" style="left:1212.45px;top:1227.50px;font-size:33.3px;line-height:42px;color:#000;letter-spacing:0.513px">&lt;test_search_field.TestSearchField object at 0x10731d160&gt;</span>
<span class="t" style="left:833.20px;top:1287.50px;font-size:33.3px;line-height:42px;color:#7A2F2F;letter-spacing:0.802px">submit_button</span>
<span class="t" style="left:1065.00px;top:1287.50px;font-size:33.3px;line-height:42px;color:#000">=</span>
<span class="t" style="left:1093.75px;top:1287.50px;font-size:33.3px;line-height:42px;color:#818594;letter-spacing:0.249px">{WebElement}</span>
<span class="t" style="left:1321.20px;top:1287.50px;font-size:33.3px;line-height:42px;color:#000;letter-spacing:0.753px">&lt;selenium.webdriver.remote.webelement.WebElement (session="c308</span>
<span class="t" style="left:2412.50px;top:1287.50px;font-size:33.3px;line-height:42px;color:#315FBD;letter-spacing:-1.883px">...</span>
<span class="t" style="left:2448.25px;top:1287.50px;font-size:33.3px;line-height:42px;color:#315FBD;letter-spacing:0.307px">View</span>
<span class="t" style="left:834.00px;top:1347.50px;font-size:33.3px;line-height:42px;color:#000;letter-spacing:0.449px">Special Variables</span>
<span class="t" style="left:66.00px;top:1421.50px;font-size:33.3px;line-height:42px;color:#6C707E;letter-spacing:0.100px">SeleniumDemoPython</span>
<span class="t" style="left:511.00px;top:1421.50px;font-size:33.3px;line-height:42px;color:#6C707E;letter-spacing:0.202px">test_search_field.py</span>
<span class="t" style="left:2038.00px;top:1423.50px;font-size:33.3px;line-height:42px;color:#6C707E;letter-spacing:-0.604px">36:1</span>
<span class="t" style="left:2141.50px;top:1423.50px;font-size:33.3px;line-height:42px;color:#6C707E;letter-spacing:-2.359px">LF</span>
<span class="t" style="left:2217.00px;top:1423.50px;font-size:33.3px;line-height:42px;color:#868A98;letter-spacing:1.039px">UTF-8</span>
<span class="t" style="left:2356.00px;top:1423.50px;font-size:33.3px;line-height:42px;color:#6C707E;letter-spacing:0.533px">2 spaces*</span>
</div></div>
</body></html>
